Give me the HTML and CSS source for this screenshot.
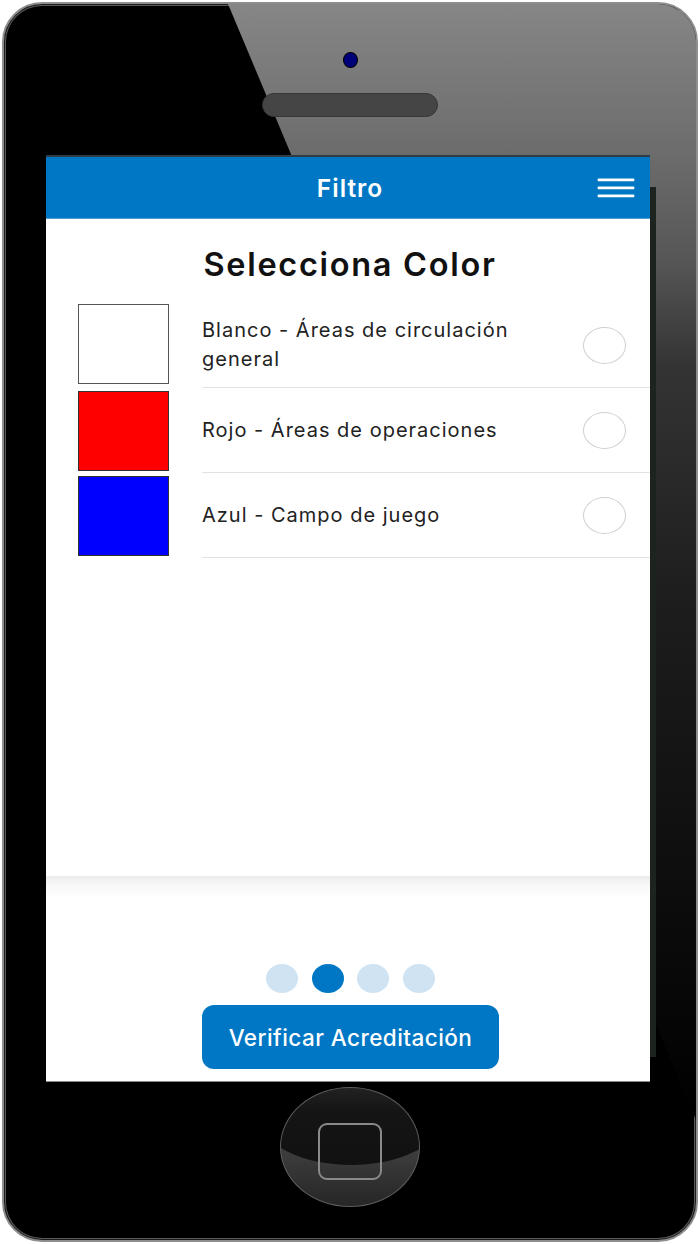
FILE: index.html
```html
<!DOCTYPE html>
<html lang="es">
<head>
<meta charset="utf-8">
<title>Filtro</title>
<link rel="stylesheet" href="styles.css">
</head>
<body>
<div class="phone">
  <div class="glare"></div>
  <div class="edge-shadow"></div>
  <div class="camera"></div>
  <div class="speaker"></div>
  <div class="screen">
    <header class="appbar">
      <span class="appbar-title">Filtro</span>
      <svg class="menu" width="38" height="20" viewBox="0 0 38 20">
        <rect x="0.5" y="0.5" width="37" height="2.8" rx="1.4" fill="#fff"/>
        <rect x="0.5" y="8.5" width="37" height="2.8" rx="1.4" fill="#fff"/>
        <rect x="0.5" y="16.5" width="37" height="2.8" rx="1.4" fill="#fff"/>
      </svg>
    </header>
    <main class="content">
      <h1 class="title">Selecciona Color</h1>
      <ul class="list">
        <li class="row">
          <span class="swatch swatch-white"></span>
          <div class="cell">
            <span class="label">Blanco - Áreas de circulación general</span>
            <span class="radio"></span>
          </div>
        </li>
        <li class="row">
          <span class="swatch swatch-red"></span>
          <div class="cell">
            <span class="label">Rojo - Áreas de operaciones</span>
            <span class="radio"></span>
          </div>
        </li>
        <li class="row">
          <span class="swatch swatch-blue"></span>
          <div class="cell">
            <span class="label">Azul - Campo de juego</span>
            <span class="radio"></span>
          </div>
        </li>
      </ul>
    </main>
    <footer class="footer">
      <div class="dots">
        <span class="dot"></span>
        <span class="dot dot-active"></span>
        <span class="dot"></span>
        <span class="dot"></span>
      </div>
      <button class="cta">Verificar Acreditación</button>
    </footer>
  </div>
  <div class="home"><span class="home-square"></span></div>
</div>
</body>
</html>
```
FILE: styles.css
```css
* { box-sizing: border-box; }
html, body { margin: 0; padding: 0; background: #fff; }
body { width: 700px; height: 1244px; overflow: hidden; font-family: Inter, "Liberation Sans", sans-serif; }

.phone {
  position: relative;
  width: 696px;
  height: 1240px;
  margin: 2px;
  border: 2px solid #8e8e8e;
  border-radius: 40px;
  background: #000;
  box-shadow: inset 0 0 0 1px #1a1a1a, inset 0 0 0 2px #5a5a5a;
  overflow: hidden;
  display: flex;
  flex-direction: column;
  align-items: center;
}

.glare {
  position: absolute;
  inset: 0;
  clip-path: polygon(224px 0, 100% 0, 100% 1116px);
  background: linear-gradient(to bottom, #868686 0, #6c6c6c 150px, #555 260px, #343434 360px, #1d1d1d 600px, #0c0c0c 900px, #000 1116px);
}

.edge-shadow {
  position: absolute;
  left: 646px;
  top: 183px;
  width: 6px;
  height: 870px;
  background: #1d2420;
}

.camera {
  position: relative;
  margin-top: 48px;
  width: 15px;
  height: 16px;
  border-radius: 50%;
  background: #00007a;
  border: 1.5px solid #000;
}

.speaker {
  position: relative;
  margin-top: 25px;
  width: 176px;
  height: 24px;
  border-radius: 12px;
  background: #454545;
  border: 1px solid #363636;
}

.screen {
  position: relative;
  align-self: flex-start;
  margin-left: 42px;
  margin-top: 38px;
  width: 604px;
  height: 927px;
  background: #fff;
  display: flex;
  flex-direction: column;
  border-bottom: 1px solid #8a8a8a;
}

.appbar {
  position: relative;
  height: 64px;
  flex: none;
  background: #0077c4;
  border-top: 2px solid #2f3b45;
  border-bottom: 1px solid #4d9bd6;
  display: flex;
  align-items: center;
  justify-content: center;
}
.appbar-title {
  color: #fff;
  font-size: 24.5px;
  font-weight: 600;
  letter-spacing: 1px;
  margin-left: 4px;
}
.menu {
  position: absolute;
  right: 15px;
  top: 21px;
}

.content {
  flex: 1;
  display: flex;
  flex-direction: column;
}
.title {
  margin: 27px 0 0;
  padding-left: 4px;
  text-align: center;
  font-size: 32.5px;
  line-height: 38px;
  font-weight: 600;
  color: #111;
  letter-spacing: 1.7px;
}
.list {
  list-style: none;
  margin: 19px 0 0;
  padding: 0;
}
.row {
  display: flex;
  height: 85px;
}
.swatch {
  flex: none;
  width: 91px;
  height: 80px;
  margin: 3px 33px 0 32px;
}
.row:first-child .swatch { margin-top: 1px; }
.swatch-white { background: #fff; border: 1.5px solid #555; }
.swatch-red { background: #ff0000; border: 1px solid #333; }
.swatch-blue { background: #0000ff; border: 1px solid #333; }

.cell {
  flex: 1;
  display: flex;
  align-items: center;
  border-bottom: 1px solid #e2e2e2;
}
.label {
  flex: 1;
  max-width: 350px;
  font-size: 20px;
  line-height: 29px;
  color: #222;
  letter-spacing: 1px;
}
.radio {
  flex: none;
  width: 43px;
  height: 37px;
  margin-left: auto;
  margin-right: 24px;
  border-radius: 50%;
  border: 1.5px solid #cfcfcf;
}

.footer {
  flex: none;
  height: 205px;
  padding-top: 88px;
  padding-left: 5px;
  display: flex;
  flex-direction: column;
  align-items: center;
  background: linear-gradient(to bottom, #ececec 0, #f8f8f8 10px, #fff 22px);
}
.dots {
  display: flex;
  gap: 13.5px;
  height: 29px;
}
.dot {
  width: 32px;
  height: 29px;
  border-radius: 50%;
  background: #cfe3f2;
}
.dot-active { background: #0077c4; }
.cta {
  margin-top: 12px;
  width: 297px;
  height: 64px;
  border: none;
  border-radius: 12px;
  background: #0077c4;
  color: #fff;
  font-family: Inter, "Liberation Sans", sans-serif;
  font-size: 22.5px;
  font-weight: 500;
  letter-spacing: 0.45px;
}

.home {
  position: relative;
  margin-top: 5px;
  width: 140px;
  height: 120px;
  border-radius: 50%;
  border: 1px solid #5e5e5e;
  overflow: hidden;
  background: linear-gradient(to bottom, #4a4a4a 0, #3a3a3a 60%, #262626 100%);
  display: flex;
  align-items: center;
  justify-content: center;
}
.home::before {
  content: "";
  position: absolute;
  left: -20px;
  top: -15px;
  width: 180px;
  height: 92px;
  border-radius: 50%;
  background: linear-gradient(to bottom, #2a2a2a 0, #151515 40%, #111 100%);
}
.home-square {
  position: relative;
  margin-top: 9px;
  width: 64px;
  height: 57px;
  border: 2px solid #8a8a8a;
  border-radius: 9px;
}
```
